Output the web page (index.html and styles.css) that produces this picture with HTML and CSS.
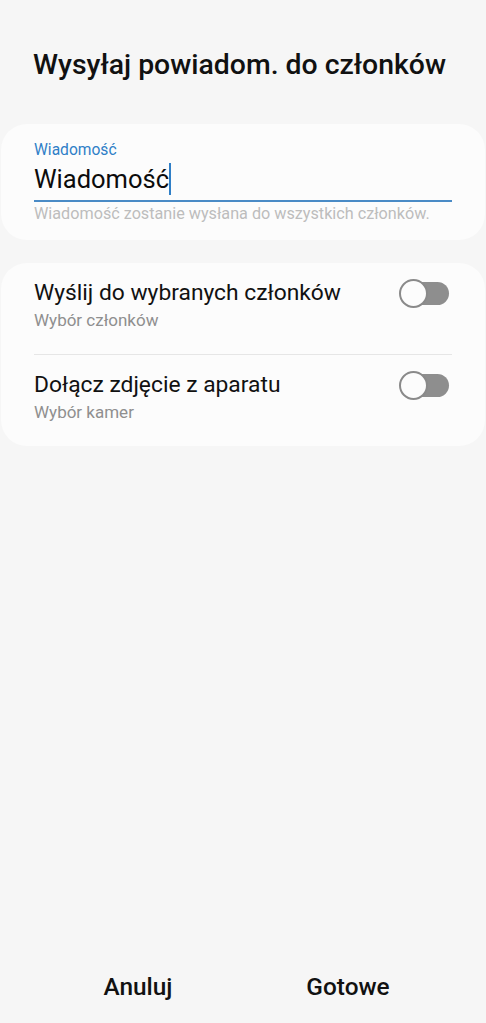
FILE: index.html
```html
<!DOCTYPE html>
<html>
<head>
  <meta charset="utf-8">
  <title>Wysyłaj powiadom. do członków</title>
  <link rel="stylesheet" href="styles.css">
</head>
<body>

<div class="screen">
  <h1 class="title">Wysyłaj powiadom. do członków</h1>

  <!-- Message field -->
  <div class="card field-card">
    <div class="field-label">Wiadomość</div>
    <div class="field-input">Wiadomość<span class="caret"></span></div>
    <div class="field-help">Wiadomość zostanie wysłana do wszystkich członków.</div>
  </div>

  <!-- Options -->
  <div class="card options">
    <div class="option">
      <div class="option-text">
        <div class="option-title">Wyślij do wybranych członków</div>
        <div class="option-sub">Wybór członków</div>
      </div>
      <div class="switch"><span class="knob"></span></div>
    </div>
    <div class="option">
      <div class="option-text">
        <div class="option-title">Dołącz zdjęcie z aparatu</div>
        <div class="option-sub">Wybór kamer</div>
      </div>
      <div class="switch"><span class="knob"></span></div>
    </div>
  </div>

  <div class="actions">
    <button class="action">Anuluj</button>
    <button class="action">Gotowe</button>
  </div>
</div>

</body>
</html>
```

FILE: styles.css
```css
body {
  margin: 0;
  background: #f6f6f6;
  font-family: Roboto, "Noto Sans", sans-serif;
  color: #111;
}

.screen {
  height: 1023px;
  display: flex;
  flex-direction: column;
}

.title {
  margin: 0;
  padding: 48px 33px 0;
  font-size: 28.4px;
  line-height: 34px;
  font-weight: 500;
  letter-spacing: 0;
}

.card {
  background: #fcfcfc;
  border-radius: 26px;
  margin: 0 1px;
}

/* Message field */
.field-card {
  margin-top: 42px;
  padding: 17px 33px 16px;
}

.field-label {
  font-size: 15.6px;
  line-height: 18px;
  color: #2f7fc7;
}

.field-input {
  margin-top: 4px;
  font-size: 25.5px;
  line-height: 30px;
  color: #0c0c0c;
  padding-bottom: 5px;
  border-bottom: 2px solid #4a8bc6;
}

.caret {
  display: inline-block;
  width: 2px;
  height: 32px;
  background: #2f7fc7;
  vertical-align: -7px;
}

.field-help {
  margin-top: 2px;
  font-size: 16.2px;
  line-height: 20px;
  color: #bdbdbd;
}

/* Options */
.options {
  margin-top: 23px;
  padding: 0 33px;
}

.option {
  display: flex;
  align-items: flex-start;
  padding: 16px 0 23px;
}

.option + .option {
  border-top: 1px solid #e6e6e6;
}

.option-text {
  flex: 1;
}

.option-title {
  font-size: 22.8px;
  line-height: 28px;
  color: #111;
}

.option-sub {
  margin-top: 2px;
  font-size: 17px;
  line-height: 22px;
  color: #8f8f8f;
}

.switch {
  position: relative;
  width: 47px;
  height: 23px;
  margin: 3px 3px 0 0;
  border-radius: 12px;
  background: #8e8e8e;
}

.knob {
  position: absolute;
  left: -3px;
  top: -3px;
  width: 25px;
  height: 25px;
  border: 2px solid #8a8a8a;
  border-radius: 50%;
  background: #fcfcfc;
}

/* Bottom buttons */
.actions {
  margin-top: auto;
  display: flex;
  padding: 0 33px 6px;
}

.action {
  flex: 1;
  border: none;
  background: none;
  font-family: inherit;
  font-size: 24.4px;
  font-weight: 500;
  color: #111;
  padding: 16px 0;
}
```
